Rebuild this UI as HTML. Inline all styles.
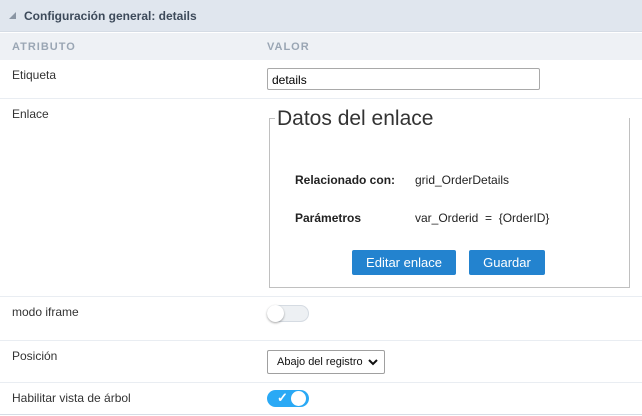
<!DOCTYPE html>
<html><head><style>
*{box-sizing:border-box;margin:0;padding:0}
body{width:642px;height:416px;background:#fff;font-family:"Liberation Sans",sans-serif;font-size:12px;color:#333;position:relative;overflow:hidden}
.hdr{position:absolute;left:0;top:0;width:642px;height:32px;background:#e0e6ee;border-bottom:1px solid #d5dce5}
.hdr span{position:absolute;left:24px;top:9px;font-size:12px;font-weight:bold;color:#3d4a5a}
.tri{position:absolute;left:9px;top:12px;width:0;height:0;border-left:7px solid transparent;border-bottom:7px solid #8a95a3}
.ch{position:absolute;left:0;top:33px;width:642px;height:27px;background:#eef1f5}
.ch span{position:absolute;top:8px;font-size:11px;font-weight:bold;letter-spacing:1px;color:#9aa6b4}
.row{position:absolute;left:0;width:642px;border-bottom:1px solid #e9edf2}
.lbl{position:absolute;left:12px;font-size:12px;color:#333}
.inp{position:absolute;left:267px;top:68px;width:273px;height:22px;border:1px solid #a9a9a9;border-radius:2px;padding:4px 4px;font-size:12px;color:#000}
.fs{position:absolute;left:269px;top:118px;width:361px;height:170px;border:1px solid #c0c0c0;border-top:none}
.fstop{position:absolute;left:269px;top:118px;width:6px;border-top:1px solid #c0c0c0}
.leg{position:absolute;left:277px;top:107px;font-size:21px;color:#333}
.b{position:absolute;font-size:12px;font-weight:bold;color:#222}
.t{position:absolute;font-size:12px;color:#222}
.btn{position:absolute;top:250px;height:25px;background:#2383cf;color:#fff;font-size:13px;text-align:center;line-height:25px;border-radius:2px}
.tg{position:absolute;left:267px;width:42px;height:17px;border-radius:9px}
.sel{position:absolute;left:267px;top:350px;width:118px;height:24px;border:1px solid #a0a0a0;border-radius:2px;font-size:11px;color:#111;padding:5px 0 0 9px;white-space:nowrap}
</style></head><body>
<div class="hdr"><div class="tri"></div><span>Configuración general: details</span></div>
<div class="ch"><span style="left:12px">ATRIBUTO</span><span style="left:267px">VALOR</span></div>
<div class="row" style="top:60px;height:39px"><span class="lbl" style="top:8px">Etiqueta</span></div>
<div class="inp">details</div>
<div class="row" style="top:99px;height:198px"><span class="lbl" style="top:8px">Enlace</span></div>
<div class="fs"></div><div class="fstop"></div>
<div class="leg">Datos del enlace</div>
<div class="b" style="left:295px;top:173px">Relacionado con:</div>
<div class="t" style="left:415px;top:173px">grid_OrderDetails</div>
<div class="b" style="left:295px;top:211px">Parámetros</div>
<div class="t" style="left:415px;top:211px">var_Orderid &nbsp;= &nbsp;{OrderID}</div>
<div class="btn" style="left:352px;width:104px">Editar enlace</div>
<div class="btn" style="left:469px;width:76px">Guardar</div>
<div class="row" style="top:297px;height:44px"><span class="lbl" style="top:8px">modo iframe</span></div>
<div class="tg" style="top:305px;background:#edf0f3;border:1px solid #d5dbe2"><div style="position:absolute;left:-1px;top:-1px;width:17px;height:17px;border-radius:50%;background:#fff;box-shadow:0 1px 2px rgba(0,0,0,.35)"></div></div>
<div class="row" style="top:341px;height:42px"><span class="lbl" style="top:8px">Posición</span></div>
<div class="sel">Abajo del registro<svg style="position:absolute;right:6px;top:8px" width="10" height="7" viewBox="0 0 10 7"><path d="M1 1l4 4 4-4" stroke="#111" stroke-width="2" fill="none"/></svg></div>
<div class="row" style="top:383px;height:32px;border-bottom:1px solid #d5dce5"><span class="lbl" style="top:8px">Habilitar vista de árbol</span></div>
<div class="tg" style="top:390px;background:#2aa9f5"><span style="position:absolute;left:10px;top:0px;color:#fff;font-size:13px;font-weight:bold">✓</span><div style="position:absolute;left:24px;top:1px;width:15px;height:15px;border-radius:50%;background:#fff"></div></div>
</body></html>
